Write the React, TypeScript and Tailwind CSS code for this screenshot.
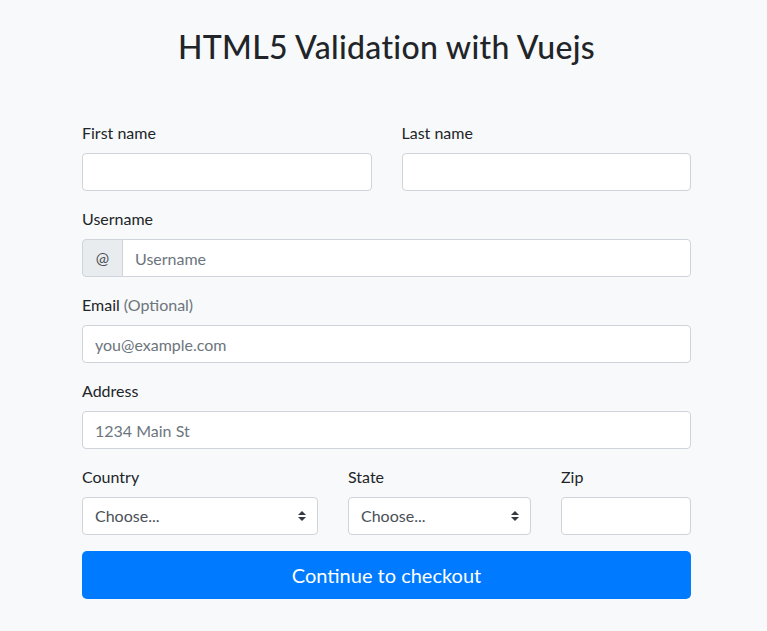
import React from 'react';

const inputCls =
    'block w-full h-[38px] px-3 py-1.5 text-base text-[#495057] bg-white border border-[#ced4da] rounded-[4px] outline-none placeholder:text-[#6c757d]';

const Chevrons = () => (
    <svg width="8" height="10" viewBox="0 0 4 5" className="absolute right-3 top-1/2 -translate-y-1/2 pointer-events-none">
        <path fill="#343a40" d="M2 0L0 2h4zm0 5L0 3h4z" />
    </svg>
);

const Field = ({ label, children, className = '' }: { label: React.ReactNode; children: React.ReactNode; className?: string }) => (
    <div className={`mb-4 ${className}`}>
        <label className="block mb-2 leading-6">{label}</label>
        {children}
    </div>
);

const Select = () => (
    <div className="relative">
        <select className={`${inputCls} appearance-none pr-8`} defaultValue="">
            <option value="">Choose...</option>
        </select>
        <Chevrons />
    </div>
);

export default function App() {
    return (
        <div className="min-h-[631px] bg-[#f8f9fa] text-[#212529] text-base" style={{ fontFamily: 'Lato, "Liberation Sans", sans-serif' }}>
            <div className="w-[609px] ml-[82px] pt-7">
                <h2 className="text-[32px] leading-[38px] font-medium text-center tracking-[0.3px] mb-[55px]">HTML5 Validation with Vuejs</h2>

                <form onSubmit={(e) => e.preventDefault()}>
                    <div className="grid grid-cols-2 gap-x-[30px]">
                        <Field label="First name">
                            <input className={inputCls} />
                        </Field>
                        <Field label="Last name">
                            <input className={inputCls} />
                        </Field>
                    </div>

                    <Field label="Username">
                        <div className="flex">
                            <span className="flex items-center justify-center shrink-0 w-[41px] h-[38px] bg-[#e9ecef] text-[#495057] border border-[#ced4da] rounded-l-[4px]">@</span>
                            <input placeholder="Username" className={`${inputCls} -ml-px rounded-l-none`} />
                        </div>
                    </Field>

                    <Field label={<>Email <span className="text-[#6c757d]">(Optional)</span></>}>
                        <input placeholder="you@example.com" className={inputCls} />
                    </Field>

                    <Field label="Address">
                        <input placeholder="1234 Main St" className={inputCls} />
                    </Field>

                    <div className="flex gap-x-[30px]">
                        <Field label="Country" className="w-[236px]">
                            <Select />
                        </Field>
                        <Field label="State" className="w-[183px]">
                            <Select />
                        </Field>
                        <Field label="Zip" className="w-[130px]">
                            <input className={inputCls} />
                        </Field>
                    </div>

                    <button type="submit" className="block w-full h-12 bg-[#007bff] text-white text-xl rounded-[5px]">
                        Continue to checkout
                    </button>
                </form>
            </div>
        </div>
    );
}
